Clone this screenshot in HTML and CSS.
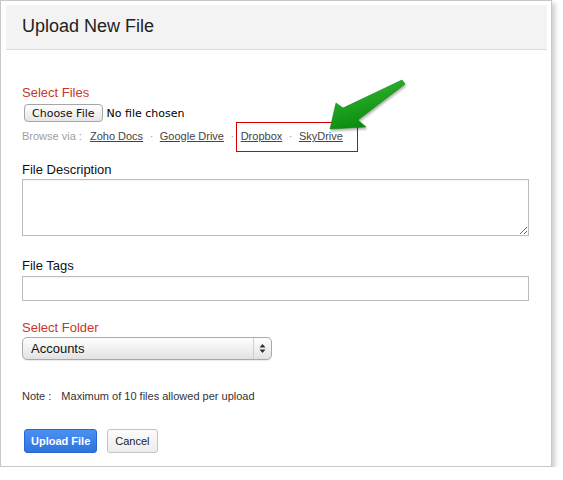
FILE: index.html
```html
<!DOCTYPE html>
<html lang="en">
<head>
    <meta charset="UTF-8">
    <meta name="viewport" content="width=device-width, initial-scale=1.0">
    <title>Upload New File</title>
<link rel="stylesheet" href="styles.css">
</head>
<body>
    <div class="panel">
        <div class="panel-head">
            <h1>Upload New File</h1>
        </div>

        <form id="uploadForm" class="panel-body">
            <div class="group group-files">
                <label class="field-title" for="fileInput">Select Files</label>
                <input type="file" id="fileInput" name="files">
                <div class="browse-row">
                    <span class="browse-label">Browse via :</span>
                    <a href="#">Zoho Docs</a>
                    <span class="sep">&middot;</span>
                    <a href="#">Google Drive</a>
                    <span class="sep">&middot;</span>
                    <a href="#">Dropbox</a>
                    <span class="sep">&middot;</span>
                    <a href="#">SkyDrive</a>
                </div>
            </div>

            <div class="group group-desc">
                <label class="field-label" for="fileDesc">File Description</label>
                <textarea id="fileDesc" name="fileDesc"></textarea>
            </div>

            <div class="group group-tags">
                <label class="field-label" for="fileTags">File Tags</label>
                <input type="text" id="fileTags" name="fileTags">
            </div>

            <div class="group group-folder">
                <label class="field-title" for="folder">Select Folder</label>
                <div class="select-wrap">
                    <select id="folder" name="folder">
                        <option>Accounts</option>
                        <option>Marketing</option>
                        <option>Sales</option>
                    </select>
                    <span class="select-arrows">
                        <svg width="7" height="11" viewBox="0 0 7 11">
                            <path d="M3.5 1 L6.5 4.5 L0.5 4.5 Z" fill="#333"/>
                            <path d="M3.5 10 L6.5 6.5 L0.5 6.5 Z" fill="#333"/>
                        </svg>
                    </span>
                </div>
            </div>

            <p class="note"><span class="note-label">Note :</span>Maximum of 10 files allowed per upload</p>

            <div class="actions">
                <button type="submit" class="btn btn-primary">Upload File</button>
                <button type="button" class="btn">Cancel</button>
            </div>
        </form>

        <!-- callout around the extra sources -->
        <div class="callout-box"></div>
        <svg class="callout-arrow" width="90" height="60" viewBox="0 0 90 60">
            <defs>
                <linearGradient id="arrowFill" x1="0" y1="0" x2="0.4" y2="1">
                    <stop offset="0" stop-color="#3cbb3c"/>
                    <stop offset="1" stop-color="#078a0b"/>
                </linearGradient>
            </defs>
            <polygon points="10,54 16,28 23,33 82,5 85,9 38,45 46,52" fill="url(#arrowFill)" stroke="#0b8a10" stroke-width="0.6" stroke-linejoin="round"/>
        </svg>
    </div>

    <script>
    document.getElementById('uploadForm').addEventListener('submit', function(event) {
        event.preventDefault();
        const files = document.getElementById('fileInput').files;
        if (files.length > 10) {
            alert('Maximum of 10 files allowed per upload');
        }
    });
    </script>
</body>
</html>
```

FILE: styles.css
```css
body {
    margin: 0;
    font-family: "Liberation Sans", Arial, sans-serif;
    color: #222;
    background-color: #fff;
}

.panel {
    position: relative;
    width: 552px;
    box-sizing: border-box;
    padding: 4px 4px 13px 5px;
    border: 1px solid #c8c8c8;
    background-color: #fff;
    box-shadow: 3px 3px 5px rgba(0, 0, 0, 0.2);
}

.panel-head {
    height: 45px;
    box-sizing: border-box;
    padding: 11px 16px 0;
    background-color: #f3f3f3;
    border-bottom: 1px solid #dcdcdc;
}

.panel-head h1 {
    margin: 0;
    font-size: 18px;
    line-height: 20px;
    font-weight: normal;
    color: #222;
}

.panel-body {
    display: block;
    padding: 0 18px 0 16px;
}

.group {
    display: flex;
    flex-direction: column;
    align-items: flex-start;
}

.group-files {
    margin-top: 35px;
}

.group-desc {
    margin-top: 19px;
}

.group-tags {
    margin-top: 22px;
}

.group-folder {
    margin-top: 19px;
}

.field-title,
.field-label {
    font-size: 13px;
    line-height: 15px;
}

.field-title {
    color: #c9362b;
}

.field-label {
    color: #111;
}

/* file picker */
input[type="file"] {
    margin: 4px 0 0 2px;
    height: 18px;
    font-family: "DejaVu Sans", sans-serif;
    font-size: 11px;
    color: #000;
}

input[type="file"]::file-selector-button {
    height: 18px;
    margin: 0 4px 0 0;
    padding: 0 7px;
    font-family: "DejaVu Sans", sans-serif;
    font-size: 11px;
    color: #111;
    border: 1px solid #a6a6a6;
    border-radius: 4px;
    background: linear-gradient(#ffffff, #e6e6e6);
}

.browse-row {
    display: flex;
    align-items: center;
    margin-top: 8px;
    font-size: 11px;
    line-height: 13px;
}

.browse-label {
    color: #a0a0a0;
    margin-right: 8px;
}

.browse-row a {
    color: #444;
    text-decoration: underline;
}

.sep {
    margin: 0 6.5px;
    color: #999;
}

textarea,
input[type="text"] {
    box-sizing: border-box;
    width: 100%;
    border: 1px solid #bcbcbc;
    font-family: inherit;
    font-size: 13px;
    box-shadow: inset 0 1px 1px rgba(0, 0, 0, 0.04);
}

textarea {
    height: 57px;
    margin-top: 2px;
}

input[type="text"] {
    height: 25px;
    margin-top: 3px;
}

/* folder dropdown */
.select-wrap {
    position: relative;
    margin-top: 2px;
    width: 250px;
    height: 23px;
}

.select-wrap select {
    appearance: none;
    -webkit-appearance: none;
    width: 100%;
    height: 100%;
    padding: 0 0 0 8px;
    font-family: "Liberation Sans", Arial, sans-serif;
    font-size: 13px;
    color: #111;
    border: 1px solid #a9a9a9;
    border-radius: 5px;
    background: linear-gradient(#fdfdfd, #f1f1f1 50%, #e2e2e2);
    box-shadow: 0 1px 1px rgba(0, 0, 0, 0.08);
}

.select-arrows {
    position: absolute;
    top: 1px;
    right: 1px;
    bottom: 1px;
    width: 17px;
    display: flex;
    align-items: center;
    justify-content: center;
    border-left: 1px solid #cfcfcf;
    pointer-events: none;
}

.note {
    margin: 30px 0 0;
    font-size: 11px;
    line-height: 13px;
    color: #333;
}

.note-label {
    margin-right: 10px;
}

.actions {
    display: flex;
    gap: 10px;
    margin: 26px 0 0 2px;
}

.btn {
    height: 24px;
    padding: 0 7px;
    font-family: "Liberation Sans", Arial, sans-serif;
    font-size: 11px;
    color: #222;
    border: 1px solid #c4c4c4;
    border-radius: 3px;
    background: linear-gradient(#fbfbfb, #ededed);
    cursor: pointer;
}

.btn-primary {
    padding: 0 6px;
    font-weight: bold;
    color: #fff;
    border-color: #2a68cf;
    background: linear-gradient(#4b90f1, #2f73df);
}

.btn-primary:hover {
    background: linear-gradient(#3f84e8, #2766d0);
}

/* annotation overlay */
.callout-box {
    position: absolute;
    left: 235px;
    top: 121px;
    width: 122px;
    height: 30px;
    box-sizing: border-box;
    border: 1px solid #d40000;
}

.callout-arrow {
    position: absolute;
    left: 319px;
    top: 74px;
    filter: drop-shadow(1px 2px 1px rgba(0, 0, 0, 0.3));
}
```
